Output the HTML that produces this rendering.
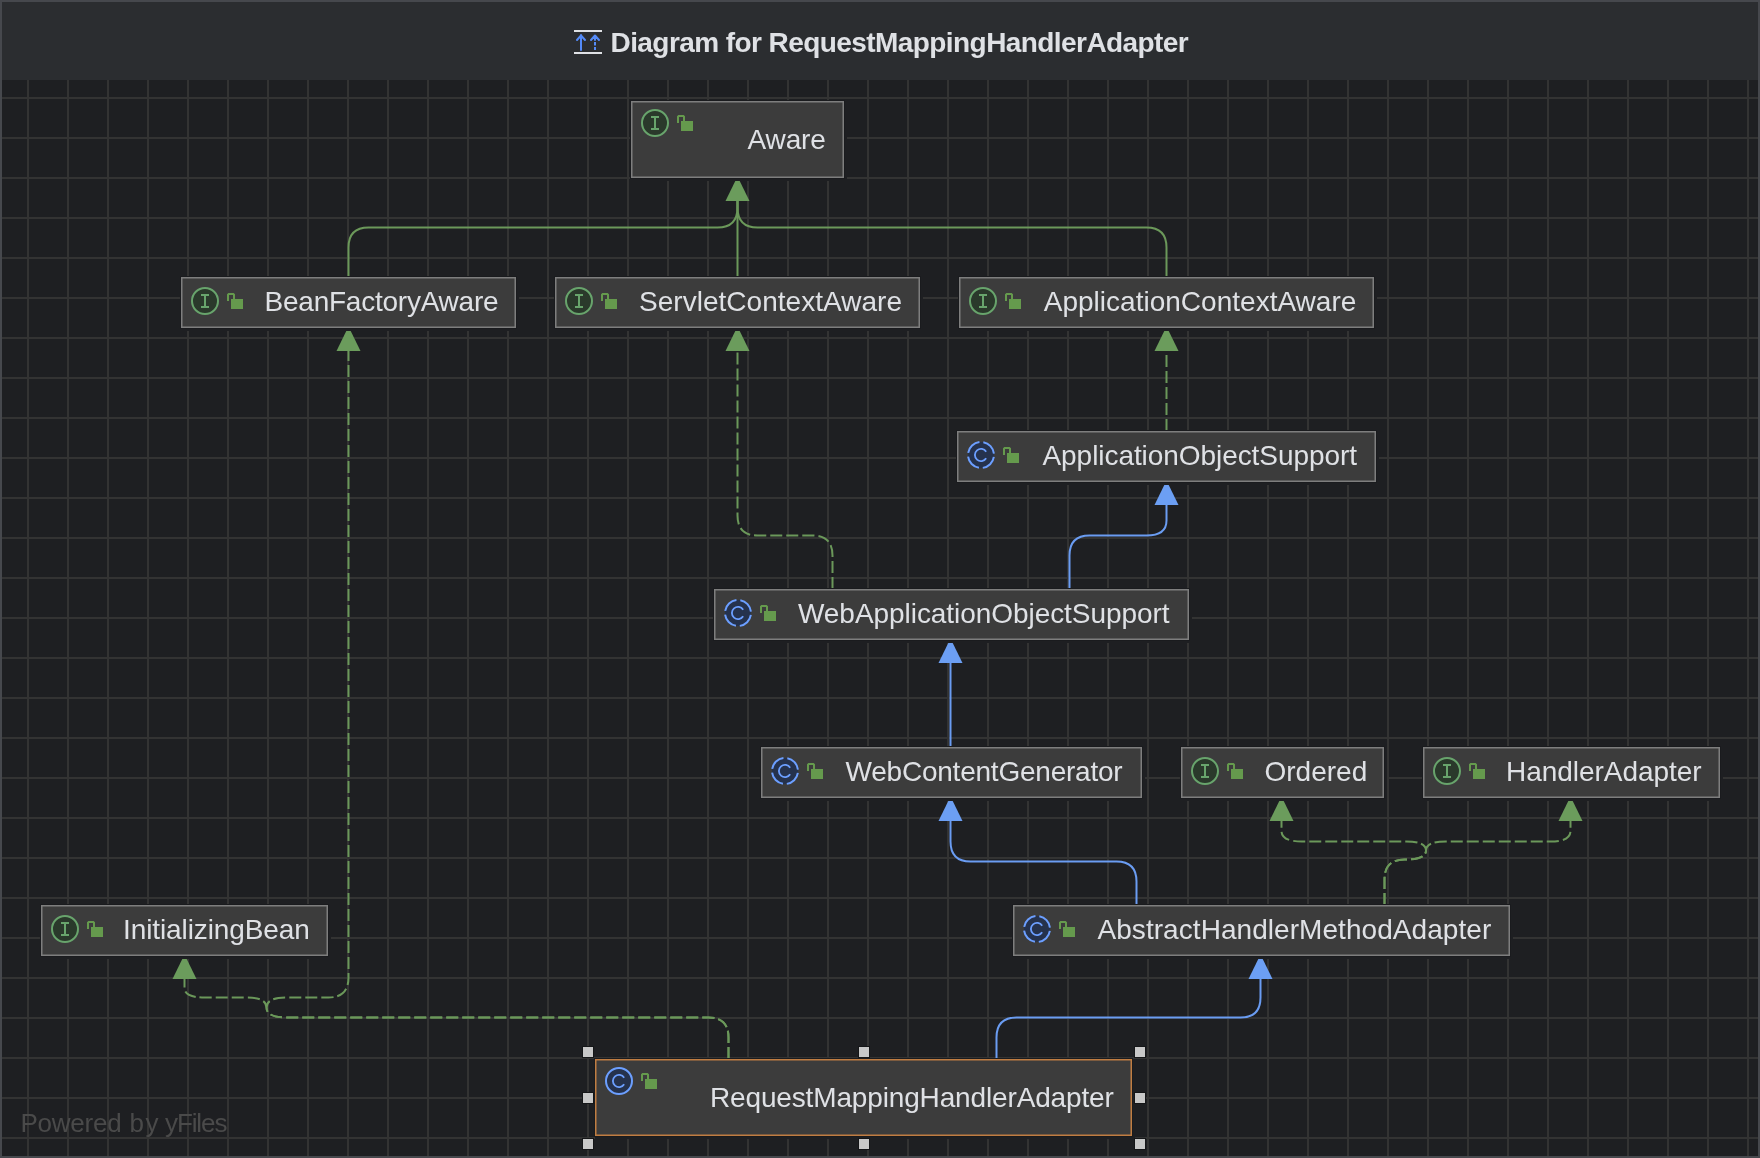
<!DOCTYPE html><html><head><meta charset="utf-8"><style>
html,body{margin:0;padding:0;width:1760px;height:1158px;overflow:hidden;background:#1e1f22}
svg{display:block;will-change:transform}
text{font-family:"Liberation Sans",sans-serif}
</style></head><body>
<svg width="1760" height="1158" viewBox="0 0 1760 1158">
<defs><pattern id="g" x="27" y="97" width="40" height="40" patternUnits="userSpaceOnUse"><rect x="0" y="0" width="2" height="40" fill="#333333"/><rect x="0" y="0" width="40" height="2" fill="#333333"/></pattern></defs>
<rect x="0" y="0" width="1760" height="1158" fill="#1e1f22"/>
<rect x="0" y="80" width="1760" height="1078" fill="url(#g)"/>
<rect x="0" y="0" width="1760" height="80" fill="#2b2d30"/>
<rect x="1" y="1" width="1758" height="1156" fill="none" stroke="#46484d" stroke-width="2"/>
<g><rect x="574" y="30" width="28" height="2" fill="#dfe1e5"/><rect x="574" y="52" width="28" height="2" fill="#dfe1e5"/><path d="M581,50 V35 M577,40 L581,35.5 L585,40" stroke="#548af7" stroke-width="2" fill="none" stroke-linecap="round" stroke-linejoin="round"/><path d="M595,36 V40 M591,40 L595,35.5 L599,40" stroke="#548af7" stroke-width="2" fill="none" stroke-linecap="round" stroke-linejoin="round"/><rect x="594" y="42" width="2" height="3.5" fill="#548af7"/><rect x="594" y="47" width="2" height="3" fill="#548af7"/></g>
<text x="610.50" y="52" font-size="28" font-weight="bold" fill="#dfe1e5" textLength="578.28" lengthAdjust="spacing">Diagram for RequestMappingHandlerAdapter</text>
<path d="M348.5,277 L348.5,247.5 Q348.5,227.5 368.5,227.5 L717.5,227.5 Q737.5,227.5 737.5,207.5 L737.5,201" fill="none" stroke="#6b985a" stroke-width="2"/>
<path d="M737.5,277 L737.5,201" fill="none" stroke="#6b985a" stroke-width="2"/>
<path d="M1166.5,277 L1166.5,247.5 Q1166.5,227.5 1146.5,227.5 L757.5,227.5 Q737.5,227.5 737.5,207.5 L737.5,201" fill="none" stroke="#6b985a" stroke-width="2"/>
<path d="M737.5,176.5 L725.5,201 L749.5,201 Z" fill="#6b9c5c"/>
<path d="M1166.5,431 L1166.5,351" fill="none" stroke="#6b985a" stroke-width="2" stroke-dasharray="12 4"/>
<path d="M1166.5,326.5 L1154.5,351 L1178.5,351 Z" fill="#6b9c5c"/>
<path d="M1069.5,589 L1069.5,555.5 Q1069.5,535.5 1089.5,535.5 L1146.5,535.5 Q1166.5,535.5 1166.5,520.5 L1166.5,505" fill="none" stroke="#6a9cf2" stroke-width="2"/>
<path d="M1166.5,480.5 L1154.5,505 L1178.5,505 Z" fill="#6c9ff4"/>
<path d="M832.5,589 L832.5,555.5 Q832.5,535.5 812.5,535.5 L757.5,535.5 Q737.5,535.5 737.5,515.5 L737.5,351" fill="none" stroke="#6b985a" stroke-width="2" stroke-dasharray="12 4"/>
<path d="M737.5,326.5 L725.5,351 L749.5,351 Z" fill="#6b9c5c"/>
<path d="M950.5,747 L950.5,663" fill="none" stroke="#6a9cf2" stroke-width="2"/>
<path d="M950.5,638.5 L938.5,663 L962.5,663 Z" fill="#6c9ff4"/>
<path d="M1136.5,905 L1136.5,881.5 Q1136.5,861.5 1116.5,861.5 L970.5,861.5 Q950.5,861.5 950.5,841.5 L950.5,821" fill="none" stroke="#6a9cf2" stroke-width="2"/>
<path d="M950.5,796.5 L938.5,821 L962.5,821 Z" fill="#6c9ff4"/>
<path d="M1384.5,905 L1384.5,879.5 Q1384.5,859.5 1404.5,859.5 Q1426,859.5 1426,850.5 Q1426,841.5 1406,841.5 L1302,841.5 Q1281.5,841.5 1281.5,831 L1281.5,821" fill="none" stroke="#6b985a" stroke-width="2" stroke-dasharray="12 4"/>
<path d="M1384.5,905 L1384.5,879.5 Q1384.5,859.5 1404.5,859.5 Q1426,859.5 1426,850.5 Q1426,841.5 1446,841.5 L1550.5,841.5 Q1570.5,841.5 1570.5,831 L1570.5,821" fill="none" stroke="#6b985a" stroke-width="2" stroke-dasharray="12 4"/>
<path d="M1281.5,796.5 L1269.5,821 L1293.5,821 Z" fill="#6b9c5c"/>
<path d="M1570.5,796.5 L1558.5,821 L1582.5,821 Z" fill="#6b9c5c"/>
<path d="M996.5,1059 L996.5,1037.5 Q996.5,1017.5 1016.5,1017.5 L1240.5,1017.5 Q1260.5,1017.5 1260.5,997.5 L1260.5,979" fill="none" stroke="#6a9cf2" stroke-width="2"/>
<path d="M1260.5,954.5 L1248.5,979 L1272.5,979 Z" fill="#6c9ff4"/>
<path d="M728.5,1059 L728.5,1037.5 Q728.5,1017.5 708.5,1017.5 L286.5,1017.5 Q266.5,1017.5 266.5,1007.5 Q266.5,997.5 246.5,997.5 L204.5,997.5 Q184.5,997.5 184.5,988 L184.5,979" fill="none" stroke="#6b985a" stroke-width="2" stroke-dasharray="12 4"/>
<path d="M728.5,1059 L728.5,1037.5 Q728.5,1017.5 708.5,1017.5 L286.5,1017.5 Q266.5,1017.5 266.5,1007.5 Q266.5,997.5 286.5,997.5 L328.5,997.5 Q348.5,997.5 348.5,977.5 L348.5,351" fill="none" stroke="#6b985a" stroke-width="2" stroke-dasharray="12 4"/>
<path d="M184.5,954.5 L172.5,979 L196.5,979 Z" fill="#6b9c5c"/>
<path d="M348.5,326.5 L336.5,351 L360.5,351 Z" fill="#6b9c5c"/>
<rect x="631" y="101" width="216" height="80" fill="#1e1f22"/>
<rect x="630.5" y="100.5" width="214" height="78" fill="none" stroke="#1a1b1e" stroke-width="1"/>
<rect x="631.75" y="101.75" width="211.5" height="75.5" fill="#3c3c3c" stroke="#7e7e7e" stroke-width="1.5"/>
<circle cx="655" cy="123" r="13" fill="#2a392b" stroke="#68a46c" stroke-width="2"/>
<path d="M651,117 h8 M651,129 h8 M655,117 v12" stroke="#68a46c" stroke-width="2" fill="none"/>
<path d="M677,116.3 L678.3,115 H683.7 L685,116.3 V121 H683 V117 H679 V123 H677 Z" fill="#659a4d"/>
<rect x="681" y="121" width="12" height="10" fill="#659a4d"/>
<text x="747.50" y="149" font-size="28" fill="#dfe1e5" textLength="78.36" lengthAdjust="spacing">Aware</text>
<rect x="181" y="277" width="338" height="54" fill="#1e1f22"/>
<rect x="180.5" y="276.5" width="336" height="52" fill="none" stroke="#1a1b1e" stroke-width="1"/>
<rect x="181.75" y="277.75" width="333.5" height="49.5" fill="#3c3c3c" stroke="#7e7e7e" stroke-width="1.5"/>
<circle cx="205" cy="301" r="13" fill="#2a392b" stroke="#68a46c" stroke-width="2"/>
<path d="M201,295 h8 M201,307 h8 M205,295 v12" stroke="#68a46c" stroke-width="2" fill="none"/>
<path d="M227,294.3 L228.3,293 H233.7 L235,294.3 V299 H233 V295 H229 V301 H227 Z" fill="#659a4d"/>
<rect x="231" y="299" width="12" height="10" fill="#659a4d"/>
<text x="264.50" y="311" font-size="28" fill="#dfe1e5" textLength="234.11" lengthAdjust="spacing">BeanFactoryAware</text>
<rect x="555" y="277" width="368" height="54" fill="#1e1f22"/>
<rect x="554.5" y="276.5" width="366" height="52" fill="none" stroke="#1a1b1e" stroke-width="1"/>
<rect x="555.75" y="277.75" width="363.5" height="49.5" fill="#3c3c3c" stroke="#7e7e7e" stroke-width="1.5"/>
<circle cx="579" cy="301" r="13" fill="#2a392b" stroke="#68a46c" stroke-width="2"/>
<path d="M575,295 h8 M575,307 h8 M579,295 v12" stroke="#68a46c" stroke-width="2" fill="none"/>
<path d="M601,294.3 L602.3,293 H607.7 L609,294.3 V299 H607 V295 H603 V301 H601 Z" fill="#659a4d"/>
<rect x="605" y="299" width="12" height="10" fill="#659a4d"/>
<text x="639.00" y="311" font-size="28" fill="#dfe1e5" textLength="263.00" lengthAdjust="spacing">ServletContextAware</text>
<rect x="959" y="277" width="418" height="54" fill="#1e1f22"/>
<rect x="958.5" y="276.5" width="416" height="52" fill="none" stroke="#1a1b1e" stroke-width="1"/>
<rect x="959.75" y="277.75" width="413.5" height="49.5" fill="#3c3c3c" stroke="#7e7e7e" stroke-width="1.5"/>
<circle cx="983" cy="301" r="13" fill="#2a392b" stroke="#68a46c" stroke-width="2"/>
<path d="M979,295 h8 M979,307 h8 M983,295 v12" stroke="#68a46c" stroke-width="2" fill="none"/>
<path d="M1005,294.3 L1006.3,293 H1011.7 L1013,294.3 V299 H1011 V295 H1007 V301 H1005 Z" fill="#659a4d"/>
<rect x="1009" y="299" width="12" height="10" fill="#659a4d"/>
<text x="1043.75" y="311" font-size="28" fill="#dfe1e5" textLength="312.59" lengthAdjust="spacing">ApplicationContextAware</text>
<rect x="957" y="431" width="422" height="54" fill="#1e1f22"/>
<rect x="956.5" y="430.5" width="420" height="52" fill="none" stroke="#1a1b1e" stroke-width="1"/>
<rect x="957.75" y="431.75" width="417.5" height="49.5" fill="#3c3c3c" stroke="#7e7e7e" stroke-width="1.5"/>
<circle cx="981" cy="455" r="13" fill="#25324d" stroke="#6c9fff" stroke-width="2" stroke-dasharray="16.420 4" stroke-dashoffset="-2"/>
<path d="M986.17,451.77 A6.10,6.10 0 1 0 986.17,458.23" stroke="#6c9fff" stroke-width="1.8" fill="none"/>
<path d="M1003,448.3 L1004.3,447 H1009.7 L1011,448.3 V453 H1009 V449 H1005 V455 H1003 Z" fill="#659a4d"/>
<rect x="1007" y="453" width="12" height="10" fill="#659a4d"/>
<text x="1042.50" y="465" font-size="28" fill="#dfe1e5" textLength="314.48" lengthAdjust="spacing">ApplicationObjectSupport</text>
<rect x="714" y="589" width="478" height="54" fill="#1e1f22"/>
<rect x="713.5" y="588.5" width="476" height="52" fill="none" stroke="#1a1b1e" stroke-width="1"/>
<rect x="714.75" y="589.75" width="473.5" height="49.5" fill="#3c3c3c" stroke="#7e7e7e" stroke-width="1.5"/>
<circle cx="738" cy="613" r="13" fill="#25324d" stroke="#6c9fff" stroke-width="2" stroke-dasharray="16.420 4" stroke-dashoffset="-2"/>
<path d="M743.17,609.77 A6.10,6.10 0 1 0 743.17,616.23" stroke="#6c9fff" stroke-width="1.8" fill="none"/>
<path d="M760,606.3 L761.3,605 H766.7 L768,606.3 V611 H766 V607 H762 V613 H760 Z" fill="#659a4d"/>
<rect x="764" y="611" width="12" height="10" fill="#659a4d"/>
<text x="798.00" y="623" font-size="28" fill="#dfe1e5" textLength="371.55" lengthAdjust="spacing">WebApplicationObjectSupport</text>
<rect x="761" y="747" width="384" height="54" fill="#1e1f22"/>
<rect x="760.5" y="746.5" width="382" height="52" fill="none" stroke="#1a1b1e" stroke-width="1"/>
<rect x="761.75" y="747.75" width="379.5" height="49.5" fill="#3c3c3c" stroke="#7e7e7e" stroke-width="1.5"/>
<circle cx="785" cy="771" r="13" fill="#25324d" stroke="#6c9fff" stroke-width="2" stroke-dasharray="16.420 4" stroke-dashoffset="-2"/>
<path d="M790.17,767.77 A6.10,6.10 0 1 0 790.17,774.23" stroke="#6c9fff" stroke-width="1.8" fill="none"/>
<path d="M807,764.3 L808.3,763 H813.7 L815,764.3 V769 H813 V765 H809 V771 H807 Z" fill="#659a4d"/>
<rect x="811" y="769" width="12" height="10" fill="#659a4d"/>
<text x="845.50" y="781" font-size="28" fill="#dfe1e5" textLength="277.20" lengthAdjust="spacing">WebContentGenerator</text>
<rect x="1181" y="747" width="206" height="54" fill="#1e1f22"/>
<rect x="1180.5" y="746.5" width="204" height="52" fill="none" stroke="#1a1b1e" stroke-width="1"/>
<rect x="1181.75" y="747.75" width="201.5" height="49.5" fill="#3c3c3c" stroke="#7e7e7e" stroke-width="1.5"/>
<circle cx="1205" cy="771" r="13" fill="#2a392b" stroke="#68a46c" stroke-width="2"/>
<path d="M1201,765 h8 M1201,777 h8 M1205,765 v12" stroke="#68a46c" stroke-width="2" fill="none"/>
<path d="M1227,764.3 L1228.3,763 H1233.7 L1235,764.3 V769 H1233 V765 H1229 V771 H1227 Z" fill="#659a4d"/>
<rect x="1231" y="769" width="12" height="10" fill="#659a4d"/>
<text x="1264.50" y="781" font-size="28" fill="#dfe1e5" textLength="102.72" lengthAdjust="spacing">Ordered</text>
<rect x="1423" y="747" width="300" height="54" fill="#1e1f22"/>
<rect x="1422.5" y="746.5" width="298" height="52" fill="none" stroke="#1a1b1e" stroke-width="1"/>
<rect x="1423.75" y="747.75" width="295.5" height="49.5" fill="#3c3c3c" stroke="#7e7e7e" stroke-width="1.5"/>
<circle cx="1447" cy="771" r="13" fill="#2a392b" stroke="#68a46c" stroke-width="2"/>
<path d="M1443,765 h8 M1443,777 h8 M1447,765 v12" stroke="#68a46c" stroke-width="2" fill="none"/>
<path d="M1469,764.3 L1470.3,763 H1475.7 L1477,764.3 V769 H1475 V765 H1471 V771 H1469 Z" fill="#659a4d"/>
<rect x="1473" y="769" width="12" height="10" fill="#659a4d"/>
<text x="1506.00" y="781" font-size="28" fill="#dfe1e5" textLength="195.63" lengthAdjust="spacing">HandlerAdapter</text>
<rect x="41" y="905" width="290" height="54" fill="#1e1f22"/>
<rect x="40.5" y="904.5" width="288" height="52" fill="none" stroke="#1a1b1e" stroke-width="1"/>
<rect x="41.75" y="905.75" width="285.5" height="49.5" fill="#3c3c3c" stroke="#7e7e7e" stroke-width="1.5"/>
<circle cx="65" cy="929" r="13" fill="#2a392b" stroke="#68a46c" stroke-width="2"/>
<path d="M61,923 h8 M61,935 h8 M65,923 v12" stroke="#68a46c" stroke-width="2" fill="none"/>
<path d="M87,922.3 L88.3,921 H93.7 L95,922.3 V927 H93 V923 H89 V929 H87 Z" fill="#659a4d"/>
<rect x="91" y="927" width="12" height="10" fill="#659a4d"/>
<text x="123.00" y="939" font-size="28" fill="#dfe1e5" textLength="186.84" lengthAdjust="spacing">InitializingBean</text>
<rect x="1013" y="905" width="500" height="54" fill="#1e1f22"/>
<rect x="1012.5" y="904.5" width="498" height="52" fill="none" stroke="#1a1b1e" stroke-width="1"/>
<rect x="1013.75" y="905.75" width="495.5" height="49.5" fill="#3c3c3c" stroke="#7e7e7e" stroke-width="1.5"/>
<circle cx="1037" cy="929" r="13" fill="#25324d" stroke="#6c9fff" stroke-width="2" stroke-dasharray="16.420 4" stroke-dashoffset="-2"/>
<path d="M1042.17,925.77 A6.10,6.10 0 1 0 1042.17,932.23" stroke="#6c9fff" stroke-width="1.8" fill="none"/>
<path d="M1059,922.3 L1060.3,921 H1065.7 L1067,922.3 V927 H1065 V923 H1061 V929 H1059 Z" fill="#659a4d"/>
<rect x="1063" y="927" width="12" height="10" fill="#659a4d"/>
<text x="1097.50" y="939" font-size="28" fill="#dfe1e5" textLength="393.72" lengthAdjust="spacing">AbstractHandlerMethodAdapter</text>
<rect x="595" y="1059" width="540" height="80" fill="#1e1f22"/>
<rect x="594.5" y="1058.5" width="538" height="78" fill="none" stroke="#1a1b1e" stroke-width="1"/>
<rect x="595.75" y="1059.75" width="535.5" height="75.5" fill="#3c3c3c" stroke="#c07d42" stroke-width="1.5"/>
<circle cx="619" cy="1081" r="13" fill="#25324d" stroke="#6c9fff" stroke-width="2"/>
<path d="M624.17,1077.77 A6.10,6.10 0 1 0 624.17,1084.23" stroke="#6c9fff" stroke-width="1.8" fill="none"/>
<path d="M641,1074.3 L642.3,1073 H647.7 L649,1074.3 V1079 H647 V1075 H643 V1081 H641 Z" fill="#659a4d"/>
<rect x="645" y="1079" width="12" height="10" fill="#659a4d"/>
<text x="710.00" y="1107" font-size="28" fill="#dfe1e5" textLength="403.83" lengthAdjust="spacing">RequestMappingHandlerAdapter</text>
<rect x="582" y="1046" width="12" height="12" fill="#151618"/>
<rect x="583" y="1047" width="10" height="10" fill="#c8c8c8"/>
<rect x="582" y="1092" width="12" height="12" fill="#151618"/>
<rect x="583" y="1093" width="10" height="10" fill="#c8c8c8"/>
<rect x="582" y="1138" width="12" height="12" fill="#151618"/>
<rect x="583" y="1139" width="10" height="10" fill="#c8c8c8"/>
<rect x="858" y="1046" width="12" height="12" fill="#151618"/>
<rect x="859" y="1047" width="10" height="10" fill="#c8c8c8"/>
<rect x="858" y="1138" width="12" height="12" fill="#151618"/>
<rect x="859" y="1139" width="10" height="10" fill="#c8c8c8"/>
<rect x="1134" y="1046" width="12" height="12" fill="#151618"/>
<rect x="1135" y="1047" width="10" height="10" fill="#c8c8c8"/>
<rect x="1134" y="1092" width="12" height="12" fill="#151618"/>
<rect x="1135" y="1093" width="10" height="10" fill="#c8c8c8"/>
<rect x="1134" y="1138" width="12" height="12" fill="#151618"/>
<rect x="1135" y="1139" width="10" height="10" fill="#c8c8c8"/>
<text x="20.50" y="1132" font-size="26" fill="#4a4a4a" textLength="101.17" lengthAdjust="spacing">Powered</text>
<text x="129.50" y="1132" font-size="26" fill="#4a4a4a" textLength="28.97" lengthAdjust="spacing">by</text>
<text x="165.00" y="1132" font-size="26" fill="#4a4a4a" textLength="62.42" lengthAdjust="spacing">yFiles</text>
</svg></body></html>
